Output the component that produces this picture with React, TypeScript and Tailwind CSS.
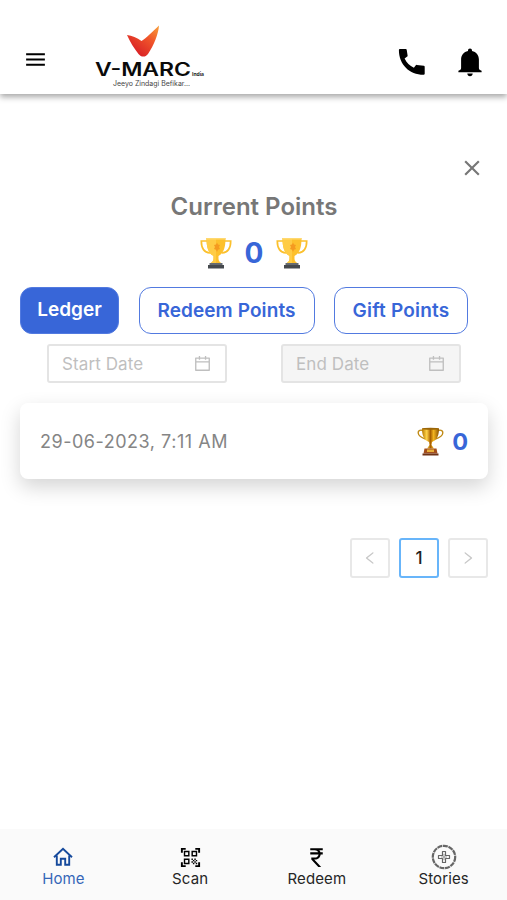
import type { ReactNode } from 'react';
import { AiOutlineCalendar, AiOutlineLeft, AiOutlineRight } from 'react-icons/ai';
import { MdClose, MdCurrencyRupee, MdMenu, MdQrCodeScanner } from 'react-icons/md';

const TABS = [
  { label: 'Ledger', active: true, className: 'w-[99px]' },
  { label: 'Redeem Points', active: false, className: 'w-44 pt-0.5 tracking-[0.1px]' },
  { label: 'Gift Points', active: false, className: 'w-[134px] pt-0.5 tracking-[0.2px]' },
];

function Logo() {
  return (
    <svg width="112" height="66" viewBox="0 0 112 66" aria-label="V-MARC India">
      <defs>
        <linearGradient id="flame" x1="1" y1="0" x2="0.25" y2="0.9">
          <stop offset="0" stopColor="#f9a13a" />
          <stop offset="0.45" stopColor="#f0552a" />
          <stop offset="1" stopColor="#d81f26" />
        </linearGradient>
      </defs>
      <path
        d="M33 11c5 .5 10 2.500 14.500 6C52.500 14 58 8 65 1.500c-.5 8-5 19.500-11 28.500-2.500 3.500-7 3.300-9.500 0C40 24 36 18 33 11z"
        fill="url(#flame)"
      />
      <text x="1" y="52" fontSize="18" fontWeight="600" textLength="96" lengthAdjust="spacingAndGlyphs" fill="#0a0a0a">
        V-MARC
      </text>
      <text x="98" y="52" fontSize="5" fontWeight="700" textLength="12" lengthAdjust="spacingAndGlyphs" fill="#222">
        India
      </text>
      <text x="19" y="61.500" fontSize="7" textLength="77" lengthAdjust="spacingAndGlyphs" fill="#444">
        Jeeyo Zindagi Befikar...
      </text>
    </svg>
  );
}

function PhoneIcon() {
  return (
    <svg width="28" height="28" viewBox="0 0 28 28" fill="currentColor">
      <path d="M1.800 1h6c.5 0 .8.3.9.8l.9 5.600c.1.500 0 .9-.4 1.200L6.600 10.500c2 4.200 5 7.200 9.300 9.200l1.700-2.300c.3-.4.700-.6 1.200-.500l7 .9c.5.100.9.500.9 1v7c0 .5-.4.9-.9.9C11.500 26.800.9 16.500.9 1.900c0-.5.4-.9.9-.9z" />
    </svg>
  );
}

function BellIcon() {
  return (
    <svg width="24" height="29" viewBox="0 0 24 29" fill="currentColor">
      <path d="M12 .5c1.200 0 2 .9 2 2v.5c4.300.9 6.900 4.300 6.900 8.600V20c0 1.300 1 2.200 2.700 2.700v1.500H.4v-1.500C2.100 22.200 3.100 21.300 3.100 20v-8.400C3.100 7.300 5.700 3.900 10 3v-.5c0-1.100.8-2 2-2z" />
      <path d="M9.300 25.500h5.400c0 1.600-1.100 2.700-2.700 2.700s-2.700-1.100-2.700-2.700z" />
    </svg>
  );
}

function HomeIcon() {
  return (
    <svg width="20" height="20" viewBox="0 0 20 20" fill="none" stroke="#164a9c" strokeWidth="1.900">
      <path d="M1 10.300L10 1.800l9 8.500" />
      <path d="M3.800 8.500v9.200h4v-5.900h4.400v5.900h4V8.500" />
    </svg>
  );
}

function Trophy() {
  return (
    <svg width="32" height="32" viewBox="0 0 32 32">
      <path d="M7.500 4H1.300c0 7 2.500 11.500 8.700 12M24.500 4h6.200c0 7-2.500 11.500-8.700 12" fill="none" stroke="#fbc02d" strokeWidth="1.700" />
      <path d="M6.500 1h19c0 9-1.500 15-7 18v3c0 2.500 2 3.500 3.500 4.500H10c1.500-1 3.500-2 3.500-4.500v-3C8 16 6.500 10 6.500 1z" fill="#fdc02c" />
      <path d="M6.500 1H16v25.500h-6c1.500-1 3.500-2 3.500-4.500v-3C8 16 6.500 10 6.500 1z" fill="#ffcc45" />
      <path d="M6.500 1h19v1.500h-19z" fill="#ffd970" />
      <path d="M17 5.500l1 2 2 .5-1 2 1 2-2 .8-1 2.200-1-2.200-2-.8 1-2-1-2 2-.5z" fill="#f59a20" />
      <path d="M9.500 26h13v2h-13z" fill="#666b70" />
      <path d="M8 28h16v3.500H8z" fill="#45494e" />
    </svg>
  );
}

function BronzeTrophy() {
  return (
    <svg width="27" height="29" viewBox="0 0 27 29">
      <defs>
        <linearGradient id="cup" x1="0" x2="1">
          <stop offset="0" stopColor="#b77800" />
          <stop offset="0.28" stopColor="#ffd44a" />
          <stop offset="0.5" stopColor="#a86000" />
          <stop offset="0.68" stopColor="#f3b51e" />
          <stop offset="1" stopColor="#8a5200" />
        </linearGradient>
      </defs>
      <path d="M6 3.500C2.500 2.500 1 4 1.200 6c.4 3.500 4 5 7.300 6M21 3.500c3.500-1 5 .5 4.800 2.500-.4 3.500-4 5-7.300 6" fill="none" stroke="#c08a14" strokeWidth="1.400" />
      <path d="M5 1.500h17c0 6-1.500 11.500-7 13.500l-.5 3 2.500 3.500h-7l2.500-3.500-.5-3C6.500 13 5 7.500 5 1.500z" fill="url(#cup)" />
      <ellipse cx="13.500" cy="1.700" rx="8.500" ry="1" fill="#9a6508" />
      <path d="M7.500 21.500h12l1 5h-14z" fill="#a34e1c" />
      <path d="M10 22.500h7v2.500h-7z" fill="#e8b03a" />
      <path d="M5.500 26.500h16v2h-16z" fill="#6e3216" />
    </svg>
  );
}

function StoriesIcon() {
  return (
    <svg width="26" height="26" viewBox="0 0 26 26" fill="none" stroke="#666">
      <circle cx="13" cy="13" r="11.200" strokeWidth="2.200" strokeDasharray="5 0.700" />
      <path d="M11.500 7.500h3v4h4v3h-4v4h-3v-4h-4v-3h4z" strokeWidth="1.200" strokeLinejoin="round" />
      <path d="M13 10v6M10 13h6" strokeWidth="0.600" />
    </svg>
  );
}

function DateField({ label, disabled }: { label: string; disabled?: boolean }) {
  return (
    <div
      className={`flex h-[39px] w-[180px] items-center justify-between rounded-[3px] border-2 border-[#e4e4e4] px-[13px] text-[#bfbfbf] ${
        disabled ? 'bg-[#f5f5f5]' : 'bg-white'
      }`}
    >
      <span className="pt-0.5 text-[17px] tracking-[0.1px]">{label}</span>
      <AiOutlineCalendar size={19} />
    </div>
  );
}

function NavItem({ icon, label, active }: { icon: ReactNode; label: string; active?: boolean }) {
  return (
    <button className={`flex flex-1 flex-col items-center ${active ? 'text-[#3566b8]' : 'text-[#262626]'}`}>
      <span className="flex h-[26px] items-center">{icon}</span>
      <span className="text-[15px] leading-[18px] tracking-[0.1px]">{label}</span>
    </button>
  );
}

export default function App() {
  return (
    <div className="flex h-[900px] w-full flex-col overflow-hidden bg-white font-['Inter','Liberation_Sans',sans-serif]">
      {/* Header */}
      <header className="flex h-[94px] shrink-0 items-start bg-white shadow-[0_3px_6px_rgba(0,0,0,0.35)]">
        <button className="mt-[47px] ml-[23px] text-black" aria-label="Menu">
          <MdMenu size={25} />
        </button>
        <div className="mt-6 ml-[46px]">
          <Logo />
        </div>
        <div className="mt-12 mr-[25px] ml-auto flex gap-8 text-black">
          <PhoneIcon />
          <BellIcon />
        </div>
      </header>

      {/* Points */}
      <main className="flex-1 pr-[19px] pl-5">
        <div className="mt-[61px] flex h-[26px] justify-end pr-[3px] text-[#777]">
          <MdClose size={26} />
        </div>
        <h1 className="mt-[10px] text-center text-[24px] leading-8 font-semibold text-[#777]">Current Points</h1>
        <div className="mt-[14px] flex h-8 items-center justify-center gap-3">
          <Trophy />
          <span className="w-5 text-center text-[28px] font-bold text-[#3866d8]">0</span>
          <Trophy />
        </div>

        <div className="mt-[18px] flex gap-[19.500px]">
          {TABS.map((tab) => (
            <button
              key={tab.label}
              className={`flex h-[47px] items-center justify-center rounded-xl border-[1.500px] border-[#527ae0] text-[19px] font-semibold whitespace-nowrap ${tab.className} ${
                tab.active ? 'bg-[#3866d8] text-white' : 'bg-white text-[#3866d8]'
              }`}
            >
              {tab.label}
            </button>
          ))}
        </div>

        <div className="mt-[10px] flex gap-[54px] pl-[27px]">
          <DateField label="Start Date" />
          <DateField label="End Date" disabled />
        </div>

        <div className="mt-5 flex h-[76px] items-center justify-between rounded-lg bg-white px-5 shadow-[0_8px_20px_rgba(0,0,0,0.17)]">
          <span className="pt-px text-[18px] tracking-[0.520px] text-[#858585]">29-06-2023, 7:11 AM</span>
          <div className="flex items-center gap-2">
            <BronzeTrophy />
            <span className="pt-0.5 text-[23.500px] font-bold text-[#3866d8]">0</span>
          </div>
        </div>

        {/* Pagination */}
        <div className="mt-[59px] flex justify-end gap-[9px]">
          <button className="flex size-10 items-center justify-center rounded-[3px] border-2 border-[#e8e8e8] text-[#c8c8c8]">
            <AiOutlineLeft size={16} />
          </button>
          <button className="flex size-10 items-center justify-center rounded-[3px] border-2 border-[#68b5fa] pt-0.5 text-[17px] font-medium text-[#222]">
            1
          </button>
          <button className="flex size-10 items-center justify-center rounded-[3px] border-2 border-[#e8e8e8] text-[#c8c8c8]">
            <AiOutlineRight size={16} />
          </button>
        </div>
      </main>

      {/* Bottom nav */}
      <nav className="flex h-[71px] shrink-0 bg-[#fafafa] pt-[15px]">
        <NavItem icon={<HomeIcon />} label="Home" active />
        <NavItem icon={<MdQrCodeScanner size={23} color="#000" />} label="Scan" />
        <NavItem icon={<MdCurrencyRupee size={25} color="#000" />} label="Redeem" />
        <NavItem icon={<StoriesIcon />} label="Stories" />
      </nav>
    </div>
  );
}
